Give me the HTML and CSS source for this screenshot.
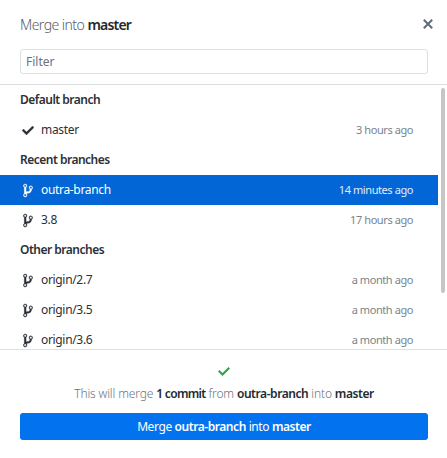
FILE: index.html
```
<!DOCTYPE html>
<html lang="en">
<head>
<meta charset="utf-8">
<title>Merge into master</title>
<link rel="stylesheet" href="styles.css">
</head>
<body>
<svg class="defs" width="0" height="0">
  <symbol id="branch" viewBox="0 0 10 16"><path d="M10 5c0-1.110-.890-2-2-2a1.993 1.993 0 0 0-1 3.720v.300c-.020.520-.230.980-.630 1.380-.400.400-.860.610-1.380.630-.830.020-1.480.160-2 .450V4.720a1.993 1.993 0 0 0-1-3.720C.880 1 0 1.890 0 3a2 2 0 0 0 1 1.720v6.560c-.590.350-1 .990-1 1.720 0 1.110.890 2 2 2 1.110 0 2-.890 2-2 0-.530-.200-1-.530-1.360.090-.060.480-.410.590-.470.250-.110.560-.170.940-.170 1.050-.050 1.950-.450 2.750-1.250S8.950 7.770 9 6.730h-.020C9.590 6.370 10 5.730 10 5zM2 1.800c.660 0 1.200.550 1.200 1.200 0 .650-.550 1.200-1.200 1.200C1.350 4.200.800 3.650.800 3c0-.650.550-1.200 1.200-1.200zm0 12.410c-.660 0-1.200-.550-1.200-1.200 0-.650.550-1.200 1.200-1.200.650 0 1.200.550 1.200 1.200 0 .650-.550 1.200-1.200 1.200zm6-8c-.660 0-1.200-.550-1.200-1.200 0-.650.550-1.200 1.200-1.200.650 0 1.200.550 1.200 1.200 0 .650-.550 1.200-1.200 1.200z"/></symbol>
  <symbol id="check" viewBox="0 0 12 9"><path d="M12 1.500l-7.500 7.500L0 4.500 1.500 3l3 3L10.500 0z"/></symbol>
</svg>
<div class="dialog">
  <header class="header">
    <h1 class="title">Merge into <strong>master</strong></h1>
    <button class="close" aria-label="Close"><svg width="10" height="10" viewBox="0 0 10 10"><path d="M.8.800l8.400 8.400M9.200.800L.8 9.200"/></svg></button>
  </header>
  <div class="filter"><input class="filter-input" type="text" placeholder="Filter"></div>
  <main class="list">
    <div class="rows">
      <h2 class="group">Default branch</h2>
      <div class="row"><svg class="icon tick"><use href="#check"/></svg><span class="name">master</span><span class="time">3 hours ago</span></div>
      <h2 class="group">Recent branches</h2>
      <div class="row selected"><svg class="icon"><use href="#branch"/></svg><span class="name">outra-branch</span><span class="time">14 minutes ago</span></div>
      <div class="row"><svg class="icon"><use href="#branch"/></svg><span class="name">3.8</span><span class="time">17 hours ago</span></div>
      <h2 class="group">Other branches</h2>
      <div class="row"><svg class="icon"><use href="#branch"/></svg><span class="name">origin/2.7</span><span class="time">a month ago</span></div>
      <div class="row"><svg class="icon"><use href="#branch"/></svg><span class="name">origin/3.5</span><span class="time">a month ago</span></div>
      <div class="row"><svg class="icon"><use href="#branch"/></svg><span class="name">origin/3.6</span><span class="time">a month ago</span></div>
    </div>
    <div class="scrollbar"></div>
  </main>
  <footer class="footer">
    <svg class="ok" width="12" height="9" viewBox="0 0 12 9"><use href="#check"/></svg>
    <p class="summary">This will merge <strong class="count">1 commit</strong> from <strong>outra-branch</strong> into <strong>master</strong></p>
    <button class="merge"><span>Merge <strong>outra-branch</strong> into <strong>master</strong></span></button>
  </footer>
</div>
</body>
</html>
```
FILE: styles.css
```
* { box-sizing: border-box; }
body { margin: 0; background: #fff; color: #2b3036; font: 12px/30px "Noto Sans", sans-serif; overflow: hidden; }
h1, h2, p { margin: 0; }
button { border: 0; padding: 0; font: inherit; }
strong { font-weight: 600; letter-spacing: -.43px; }
.defs { display: none; }
.dialog { width: 447px; height: 458px; display: flex; flex-direction: column; }
.header { height: 49px; padding: 0 14px 0 20px; display: flex; align-items: center; justify-content: space-between; }
.title { font-size: 14px; font-weight: 300; color: #586069; line-height: 48px; letter-spacing: -.54px; padding-top: 1px; }
.title strong { color: #24292e; letter-spacing: -.8px; }
.close { background: none; width: 10px; height: 10px; display: flex; margin-top: -1px; }
.close path { stroke: #616b78; stroke-width: 2; }
.filter { height: 36px; padding: 0 19px 0 20px; border-bottom: 1px solid #dcdfe1; }
.filter-input { display: block; width: 100%; height: 25px; border: 1px solid #dde1e4; border-radius: 3px; padding: 0 5px; font: 12px "Noto Sans", sans-serif; outline: 0; }
.filter-input::placeholder { color: #6a737d; opacity: 1; }
.list { height: 264px; display: flex; overflow: hidden; }
.rows { width: 438px; }
.group { height: 30px; padding: 0 0 0 20px; font-size: 12px; font-weight: 600; line-height: 30px; letter-spacing: -.5px; }
.row { height: 30px; padding: 0 25px 0 23px; display: flex; align-items: center; }
.icon { width: 10px; height: 15px; margin-right: 8px; fill: currentColor; stroke: currentColor; stroke-width: .3; }
.tick { width: 12px; height: 9px; margin: 0 7px 0 -1px; }
.name { flex: 1; letter-spacing: -.33px; }
.time { color: #7a838c; font-size: 11px; letter-spacing: -.42px; }
.selected { background: #0366d6; color: #fff; }
.selected .time { color: #e0edfa; }
.scrollbar { width: 4px; height: 205px; margin: 3px 0 0 3px; border-radius: 2px; background: #c6c6c6; }
.footer { height: 109px; border-top: 1px solid #dce1e5; padding: 17px 19px 0 20px; display: flex; flex-direction: column; align-items: center; }
.ok { fill: #28a745; flex: none; }
.summary { margin-top: 8px; height: 20px; line-height: 20px; color: #6a737d; font-weight: 300; white-space: nowrap; letter-spacing: -.14px; }
.summary strong { color: #24292e; }
.summary .count { letter-spacing: -.68px; }
.merge { width: 100%; height: 27px; margin-top: 9px; border-radius: 3px; background: #0372ef; color: #fff; line-height: 27px; font-weight: 400; letter-spacing: -.4px; }
```
